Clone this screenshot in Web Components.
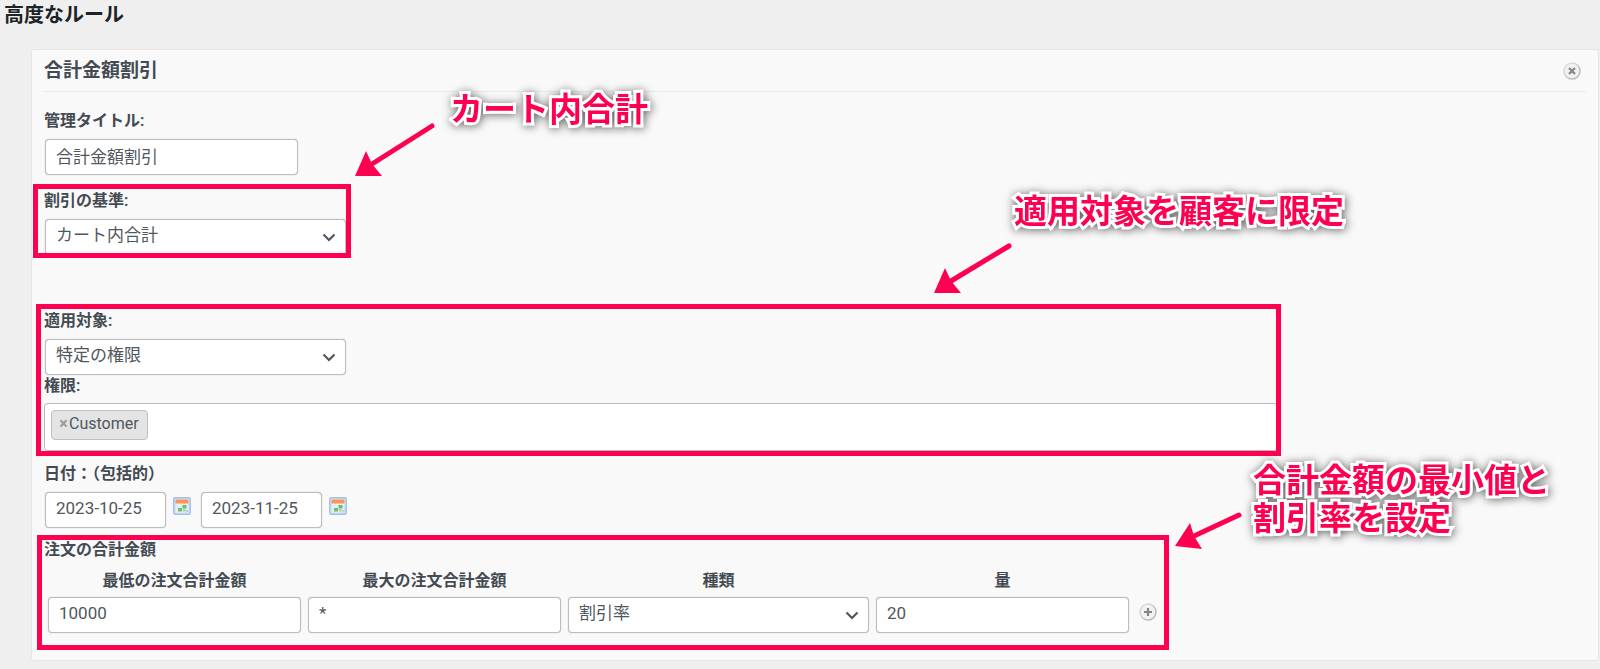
<!DOCTYPE html>
<html lang="ja">
<head>
<meta charset="utf-8">
<title>高度なルール</title>
<style>
  body {
    margin: 0;
    background: #efefef;
    color: #434a52;
    font: 16px/22px Roboto, "Noto Sans CJK JP", sans-serif;
    --mark: #ff0050;
  }
  h1 { margin: 0 0 19px; padding-left: 4px; font-size: 20px; line-height: 30px; font-weight: 700; color: #1d2327; }
  .gap { margin-top: 15px; }
  .apply { margin-top: 55px; width: 80%; }
  .base { width: 302px; }
  .dates { margin-top: 12px; }
  .order { margin-top: 11px; width: 1117px; }
  .base { --t: -6px; --r: -5px; --b: -3px; --l: -11px; }
  .apply { --t: -6px; --r: -3px; --b: -5px; --l: -8px; }
  .order { --t: -4px; --r: -8px; --b: -17px; --l: -7px; }
  note-callout, note-arrow { position: absolute; }
  #n1 { left: 418px; top: 38px; }
  #n2 { left: 982px; top: 140px; }
  #n3 { left: 1221px; top: 409px; }
  #a1 { left: 320px; top: 70px; }
  #a2 { left: 899px; top: 187px; }
  #a3 { left: 1140px; top: 456px; }
</style>
</head>
<body>
<h1>高度なルール</h1>
<rule-card heading="合計金額割引">
  <text-field class="first" label="管理タイトル:" value="合計金額割引"></text-field>
  <marked-area class="base gap">
    <select-field label="割引の基準:" value="カート内合計"></select-field>
  </marked-area>
  <marked-area class="apply">
    <select-field label="適用対象:" value="特定の権限"></select-field>
    <tag-field label="権限:" value="Customer"></tag-field>
  </marked-area>
  <date-range class="dates"></date-range>
  <marked-area class="order">
    <order-table></order-table>
  </marked-area>
  <note-callout id="n1">カート内合計</note-callout>
  <note-arrow id="a1" tail="80,6" head="3,56 14,31 20,44 30,56"></note-arrow>
  <note-callout id="n2">適用対象を顧客に限定</note-callout>
  <note-arrow id="a2" tail="78,9" head="3,56 14,31 20,44 30,56"></note-arrow>
  <note-callout id="n3">合計金額の最小値と<br>割引率を設定</note-callout>
  <note-arrow id="a3" tail="67,9" head="3,40 18,17 22,30 30,43"></note-arrow>
</rule-card>

<script>
const controls = `
  *, *::before, *::after { box-sizing: border-box; }
  :host { display: block; }
  label, .label { display: block; width: fit-content; font-weight: 600; line-height: 22px; margin-bottom: 7px; }
  input, select {
    display: block; width: 253px; height: 36px; margin: 0; padding: 0 10px 4px;
    border: 1px solid #bcbdc0; border-radius: 4px; background: #fff; color: #50575e;
    font: inherit; font-size: 17px; appearance: none; box-shadow: 0 0 1px 0 #a8aaad;
  }
  select { width: 301px; }
  .pick { position: relative; display: block; width: 301px; }
  .pick svg { position: absolute; right: 10px; top: 14px; width: 14px; height: 9px; pointer-events: none; }
  .inset { margin-left: 1px; }
`;
const chevron = `<svg viewBox="0 0 14 9" aria-hidden="true"><path d="M1.5 1.5 7 7 12.5 1.5" fill="none" stroke="#50575e" stroke-width="2.2"/></svg>`;
const calendar = `<svg viewBox="0 0 18 18" aria-hidden="true">
  <rect x=".8" y=".8" width="16.4" height="16.4" rx="1.5" fill="#d6e5f8" stroke="#a3c0e8" stroke-width="1.5"/>
  <rect x="3" y="6" width="12" height="9.5" fill="#e2eff5"/>
  <rect x="2.5" y="2.5" width="13" height="4" rx=".6" fill="#fb9556"/>
  <rect x="9.5" y="8" width="4" height="3.5" fill="#73bb68"/><rect x="5" y="11" width="4" height="3.5" fill="#73bb68"/>
  <rect x="10" y="12" width="2.5" height="2.5" fill="#a9d3a2"/><path d="M13 16.5v-3.5h3.5z" fill="#b8cff0"/></svg>`;
const disc = (id, glyph) => `<svg viewBox="0 0 18 18" aria-hidden="true">
  <defs><linearGradient id="${id}" x1="0" y1="0" x2="1" y2="1"><stop offset="0" stop-color="#e4e4e4"/><stop offset="1" stop-color="#b0b0b0"/></linearGradient></defs>
  <circle cx="9" cy="9" r="8" fill="#f1f1f1" stroke="url(#${id})" stroke-width="1.5"/>
  <path d="${glyph}" stroke="#858585" stroke-width="2.2" fill="none"/></svg>`;
const iconButton = `
  button { display: block; flex: none; width: 18px; height: 18px; padding: 0; border: 0; background: none; cursor: pointer; }
  button svg { display: block; width: 18px; height: 18px; }
`;

function define(name, render) {
  customElements.define(name, class extends HTMLElement {
    constructor() { super(); this.attachShadow({ mode: "open" }); }
    connectedCallback() { this.shadowRoot.innerHTML = render(this); }
  });
}

define("rule-card", el => `<style>
  :host { display: block; position: relative; box-sizing: border-box; margin: 0 1px 0 31px; padding: 0 12px 27px;
    background: #f9f9f9; border: 1px solid #e5e5e5; border-radius: 3px; }
  header { display: flex; align-items: center; justify-content: space-between; height: 41px; margin-bottom: 18px;
    padding-right: 5px; border-bottom: 1px solid #ebebeb; }
  h2 { margin: 0; font-size: 19px; line-height: 28px; font-weight: 600; }
  ${iconButton}
</style>
<header><h2>${el.getAttribute("heading")}</h2><button type="button" aria-label="削除">${disc("g", "M6 6 12 12M12 6 6 12")}</button></header>
<slot></slot>`);

define("marked-area", () => `<style>
  :host { display: block; position: relative; }
  .frame { position: absolute; inset: var(--t) var(--r) var(--b) var(--l); border: 5px solid var(--mark); pointer-events: none; }
</style><slot></slot><div class="frame"></div>`);

define("text-field", el => `<style>${controls}</style>
<label for="f">${el.getAttribute("label")}</label>
<input class="inset" id="f" type="text" value="${el.getAttribute("value")}">`);

define("select-field", el => `<style>${controls}</style>
<label for="f">${el.getAttribute("label")}</label>
<span class="pick inset"><select id="f"><option>${el.getAttribute("value")}</option></select>${chevron}</span>`);

define("tag-field", el => `<style>${controls}
  .label { margin-bottom: 6px; }
  .box { display: flex; align-items: flex-start; height: 48px; padding: 6px; background: #fff; border: 1px solid #b3b9be; border-radius: 4px; }
  .tag { display: flex; align-items: center; gap: 1px; height: 30px; padding: 0 8px 2px 7px; background: #e4e4e4;
    border: 1px solid #bfbfbf; border-radius: 4px; color: #50575e; }
  button { padding: 0; width: 9px; border: 0; background: none; color: #999; font: inherit; font-weight: 700; cursor: pointer; }
</style>
<span class="label" id="l">${el.getAttribute("label")}</span>
<div class="box" role="group" aria-labelledby="l"><span class="tag"><button type="button">×</button><span>${el.getAttribute("value")}</span></span></div>`);

define("date-range", () => `<style>${controls}
  .row { display: flex; align-items: flex-start; margin-left: 1px; }
  input { width: 121px; }
  ${iconButton}
  button { margin: 5px 10px 0 7px; }
</style>
<label for="from">日付：（包括的）</label>
<div class="row"><input id="from" type="text" value="2023-10-25"><button type="button" aria-label="開始日を選択">${calendar}</button>
<input type="text" aria-label="終了日" value="2023-11-25"><button type="button" aria-label="終了日を選択">${calendar}</button></div>`);

define("order-table", () => `<style>${controls}
  table { border-collapse: collapse; margin-left: 1px; }
  caption { text-align: left; font-weight: 600; margin: 0 0 9px -1px; }
  th { padding: 0 4px 5px 3px; font-weight: 600; line-height: 22px; }
  td { padding: 0 4px 0 3px; }
  td:last-child { padding: 0 0 6px 6px; }
  ${iconButton}
</style>
<table>
  <caption>注文の合計金額</caption>
  <thead><tr><th id="min">最低の注文合計金額</th><th id="max">最大の注文合計金額</th><th id="type">種類</th><th id="amount">量</th><td></td></tr></thead>
  <tbody><tr>
    <td><input type="text" aria-labelledby="min" value="10000"></td>
    <td><input type="text" aria-labelledby="max" value="*"></td>
    <td><span class="pick"><select aria-labelledby="type"><option>割引率</option></select>${chevron}</span></td>
    <td><input type="text" aria-labelledby="amount" value="20"></td>
    <td><button type="button" aria-label="行を追加">${disc("p", "M9 5v8M5 9h8")}</button></td>
  </tr></tbody>
</table>`);

define("note-callout", () => `<style>
  :host { display: block; white-space: nowrap; color: var(--mark); font: 700 33px/38px "Noto Sans CJK JP", sans-serif;
    -webkit-text-stroke: 6px #fff; paint-order: stroke fill; stroke-linejoin: round;
    filter: drop-shadow(1px 1px 5px rgba(0, 0, 0, .6)); }
</style><slot></slot>`);

define("note-arrow", el => {
  const tail = el.getAttribute("tail"), head = el.getAttribute("head"), notch = head.split(" ")[2];
  return `<style>:host { display: block; width: 90px; height: 64px; pointer-events: none; } svg { display: block; }
  path { fill: none; stroke: var(--mark); stroke-width: 5; stroke-linecap: round; } polygon { fill: var(--mark); }</style>
  <svg width="90" height="64" viewBox="0 0 90 64" aria-hidden="true"><path d="M${tail}L${notch}"/><polygon points="${head}"/></svg>`;
});
</script>
</body>
</html>
